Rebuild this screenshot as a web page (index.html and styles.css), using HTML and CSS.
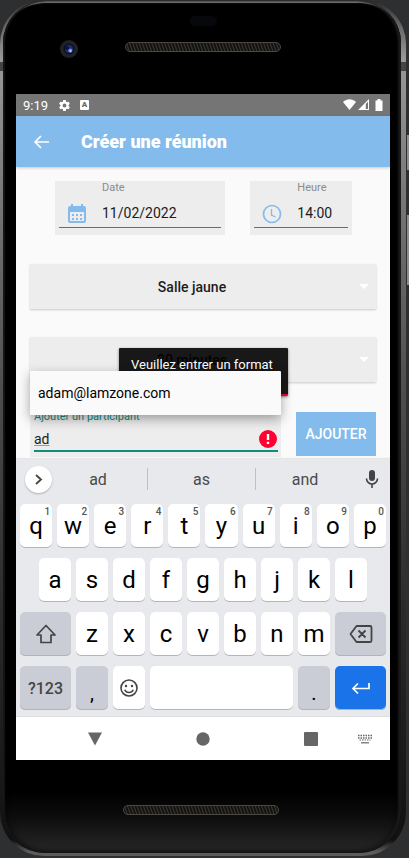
FILE: index.html
```html
<!DOCTYPE html>
<html lang="fr">
<head>
<meta charset="utf-8">
<meta name="viewport" content="width=device-width, initial-scale=1">
<title>Créer une réunion</title>
<link rel="stylesheet" href="styles.css">
</head>
<body>
<div class="phone">
<span class="side-button power"></span><span class="side-button volume"></span>
<div class="glass">
  <div class="bezel-top">
    <span class="sensor"></span>
    <svg class="camera" viewBox="0 0 18 18" aria-hidden="true"><circle cx="9" cy="9" r="9" fill="#212126"/><circle cx="9" cy="9" r="5.5" fill="#0b1026"/><circle cx="9" cy="9" r="4" fill="#1c2f6e"/><circle cx="7" cy="8" r="2" fill="#0c1434"/><circle cx="10.300" cy="10.500" r="2" fill="#5f86e8"/><circle cx="10.500" cy="11" r=".9" fill="#c5d8ff"/></svg>
    <span class="speaker"></span>
  </div>

  <div class="screen">
    <div class="status">
      <span>9:19</span>
      <svg class="gear" viewBox="0 0 24 24" aria-hidden="true"><path fill="#fff" d="M19.400 13c.1-.3.1-.6.1-1s0-.7-.1-1l2.100-1.600c.2-.2.2-.4.1-.7l-2-3.400c-.1-.2-.4-.3-.6-.2l-2.500 1a7 7 0 0 0-1.700-1l-.4-2.600c0-.3-.2-.5-.5-.5h-4c-.2 0-.5.200-.5.400L9 5.100a7 7 0 0 0-1.700 1l-2.400-1c-.3-.1-.5 0-.7.200l-2 3.400c-.1.200 0 .5.200.6L4.500 11v2l-2.100 1.600c-.2.200-.2.400-.1.700l2 3.400c.1.200.4.300.6.200l2.500-1c.5.400 1.100.7 1.700 1l.3 2.600c.1.300.3.500.6.500h4c.2 0 .5-.2.500-.4l.4-2.700a7 7 0 0 0 1.700-1l2.400 1c.3.100.5 0 .7-.2l2-3.400c.1-.2 0-.5-.2-.6zM12 15.500a3.500 3.500 0 1 1 0-7 3.500 3.500 0 0 1 0 7z"/></svg>
      <span class="badge-a">A</span>
      <svg class="signals" viewBox="0 0 42 14" aria-hidden="true"><path fill="#fff" d="M1 4C5 .400 10 .400 14 4L7.500 12z"/><path fill="#fff" fill-rule="evenodd" d="M16 12 27 1v11zM23.800 6v5H26V3.800z"/><path fill="#fff" d="M35.500 1h3v1.400H40.500V13h-7V2.400h2z"/></svg>
    </div>

    <header class="appbar">
      <button class="back" aria-label="Retour"><svg viewBox="0 0 16 14"><path d="M8 1 2 7l6 6M2 7h14" fill="none" stroke="#fff" stroke-width="1.700"/></svg></button>
      <h1>Créer une réunion</h1>
    </header>

    <main>
      <form class="form">
        <div class="when">
          <div class="field">
            <svg viewBox="0 0 20 20" aria-hidden="true"><path fill="#83bbec" fill-rule="evenodd" d="M3 2h1V0h2v2h8V0h2v2h1a2 2 0 0 1 2 2v13a2 2 0 0 1-2 2H3a2 2 0 0 1-2-2V4a2 2 0 0 1 2-2zm0 6v9h14V8z"/><path stroke="#83bbec" stroke-width="2" stroke-dasharray="2 2" d="M5 11h10M5 15h10" fill="none"/></svg>
            <label for="date">Date</label>
            <input id="date" type="text" value="11/02/2022">
          </div>
          <div class="field">
            <svg viewBox="0 0 20 20" aria-hidden="true"><circle cx="10" cy="10" r="8.500" fill="none" stroke="#83bbec" stroke-width="1.700"/><path d="M9.500 5v6l4 2" fill="none" stroke="#83bbec" stroke-width="1.300"/></svg>
            <label for="heure">Heure</label>
            <input id="heure" type="text" value="14:00">
          </div>
        </div>

        <div class="spinner"><select aria-label="Salle"><option>Salle jaune</option></select></div>
        <div class="spinner"><select aria-label="Durée"><option>30 minutes</option></select></div>

        <div class="invite">
          <div class="participant">
            <label for="participant">Ajouter un participant</label>
            <input id="participant" type="text" value="ad">
            <svg class="alert" viewBox="0 0 18 18" aria-hidden="true"><circle cx="9" cy="9" r="9" fill="#ff0030"/><path d="M9 4v6M9 11.700v2.300" stroke="#fff" stroke-width="2.400"/></svg>
            <div class="error">Veuillez entrer un format</div>
            <button type="button" class="suggestion">adam@lamzone.com</button>
          </div>
          <button type="button" class="add">AJOUTER</button>
        </div>
      </form>
    </main>

    <section class="keyboard" aria-label="Clavier">
      <div class="words">
        <button class="more" aria-label="Plus"><svg viewBox="0 0 27 27"><path d="m11 9 5 4.500-5 4.500" fill="none" stroke="#444" stroke-width="1.800"/></svg></button>
        <button>ad</button><button class="middle">as</button><button>and</button>
        <button aria-label="Micro"><svg class="mic" viewBox="0 0 14 20"><rect x="4" y="1" width="6" height="11" rx="3" fill="#444"/><path d="M1.500 9.500a5.500 5.500 0 0 0 11 0M7 15v4" fill="none" stroke="#444" stroke-width="1.600"/></svg></button>
      </div>
      <div class="row">
        <button>q<sup>1</sup></button><button>w<sup>2</sup></button><button>e<sup>3</sup></button><button>r<sup>4</sup></button><button>t<sup>5</sup></button><button>y<sup>6</sup></button><button>u<sup>7</sup></button><button>i<sup>8</sup></button><button>o<sup>9</sup></button><button>p<sup>0</sup></button>
      </div>
      <div class="row home">
        <button>a</button><button>s</button><button>d</button><button>f</button><button>g</button><button>h</button><button>j</button><button>k</button><button>l</button>
      </div>
      <div class="row">
        <button class="wide grey" aria-label="Majuscule"><svg viewBox="0 0 22 20"><path d="M11 1.500 2 11h4v7.500h10V11h4z" fill="none" stroke="#444" stroke-width="1.700" stroke-linejoin="round"/></svg></button>
        <button>z</button><button>x</button><button>c</button><button>v</button><button>b</button><button>n</button><button>m</button>
        <button class="wide grey" aria-label="Effacer"><svg class="erase" viewBox="0 0 24 20"><path d="M7.500 2H21a1.500 1.500 0 0 1 1.500 1.500v13A1.500 1.500 0 0 1 21 18H7.500L1.500 10zM9.500 6.500l7 7M16.500 6.500l-7 7" fill="none" stroke="#444" stroke-width="1.800" stroke-linejoin="round"/></svg></button>
      </div>
      <div class="row">
        <button class="wide grey symbols">?123</button>
        <button class="letter grey low">,</button>
        <button class="letter" aria-label="Émoji"><svg viewBox="0 0 20 20"><circle cx="10" cy="10" r="8" fill="none" stroke="#444" stroke-width="1.600"/><circle cx="7" cy="8" r="1.200" fill="#444"/><circle cx="13" cy="8" r="1.200" fill="#444"/><path d="M5.700 11.700a4.700 4.700 0 0 0 8.600 0" fill="none" stroke="#444" stroke-width="1.500"/></svg></button>
        <button class="space" aria-label="Espace"></button>
        <button class="letter grey low">.</button>
        <button class="wide enter" aria-label="Entrée"><svg viewBox="0 0 20 14"><path d="M18 2v5.500H2M7 2.500 2 7.500l5 5" fill="none" stroke="#fff" stroke-width="1.700"/></svg></button>
      </div>
    </section>

    <nav class="navbar">
      <button class="nav-back" aria-label="Retour"><svg viewBox="0 0 16 16"><path d="M1 1.500h14L8 14.500z" fill="#666"/></svg></button>
      <button class="nav-home" aria-label="Accueil"><svg viewBox="0 0 16 16"><circle cx="8" cy="8" r="6.700" fill="#666"/></svg></button>
      <button class="nav-recent" aria-label="Récents"><svg viewBox="0 0 16 16"><rect x="1" y="1" width="14" height="14" rx="1" fill="#666"/></svg></button>
      <button class="nav-keys" aria-label="Clavier"><svg viewBox="0 0 16 10"><path d="M1 1.500h14M1 4h14" stroke="#666" stroke-width="1.300" stroke-dasharray="1.500 1"/><path d="M2.500 6h11" stroke="#666" stroke-dasharray="1.500 1"/><path d="M4 8.800h8" stroke="#666" stroke-width="1.200"/></svg></button>
    </nav>
  </div>

  <div class="bezel-bottom"><span class="speaker"></span></div>
</div>
</div>
</body>
</html>
```
FILE: styles.css
```css
* { box-sizing: border-box; }

body {
  margin: 0;
  background: #2d2f31;
  font-family: Roboto, "Liberation Sans", sans-serif;
  color: #1c1c1c;
}

button, input, select {
  margin: 0;
  padding: 0;
  border: 0;
  border-radius: 0;
  background: none;
  font: inherit;
  color: inherit;
}

svg { display: block; }

/* Phone body */
.phone {
  position: relative;
  margin: 0 3px 2px 0;
  padding: 1px 5px 3px 3px;
  border-radius: 44px;
  background:
    linear-gradient(#444, #444) 0 62px / 100% 9px no-repeat,
    linear-gradient(#2a2a2a 0, #666 25px, #999 60px, #888 130px, #6c6c6c 240px, #4c4c4c 400px, #2c2c2c 600px, #181818 780px, #111 840px, #5c5c5c 852px);
}

.glass {
  border-radius: 42px;
  padding: 0 11px 0 13px;
  background: linear-gradient(#000 0, #000 790px, #0c0c0c 815px, #262626 848px);
  box-shadow: inset 2px 0 1px #161616, inset -3px 0 2px #1a1a1a, inset 0 6px 1px -4px #777, inset 0 0 8px #000;
}

.side-button {
  position: absolute;
  right: -3px;
  width: 2px;
  background: #8d8d8d;
}
.power { top: 135px; height: 35px; }
.volume { top: 215px; height: 70px; }

.bezel-top {
  display: grid;
  grid-template-columns: 1fr 156px 1fr;
  grid-template-rows: 10px 26px;
  row-gap: 4px;
  align-items: center;
  justify-items: center;
  height: 93px;
  padding-top: 15px;
}
.sensor {
  grid-column: 2;
  width: 27px;
  height: 10px;
  border-radius: 5px;
  background: #07080c;
}
.camera { grid-column: 1; width: 18px; height: 18px; margin: 12px 3px 0 0; }
.speaker {
  width: 156px;
  height: 10px;
  border: 1px solid #4a4845;
  border-radius: 5px;
  background: repeating-linear-gradient(70deg, #3c3935 0, #14120f 1px, #14120f 2px, #3c3935 3px);
}
.bezel-top .speaker { grid-column: 2; margin-top: 8px; }
.bezel-bottom { display: flex; justify-content: center; height: 93px; padding: 45px 4px 0 0; }

.screen { background: #fafafa; }

/* Status and app bar */
.status {
  display: flex;
  align-items: center;
  height: 22px;
  padding: 0 6px 0 7px;
  background: #757575;
  color: #fff;
  font-size: 13px;
}
.gear { width: 13px; height: 13px; margin-left: 10px; }
.badge-a {
  width: 9px;
  height: 10px;
  margin-left: 9px;
  border-radius: 1px;
  background: #fff;
  color: #666;
  font-size: 8px;
  font-weight: 900;
  line-height: 10px;
  text-align: center;
}
.signals { width: 42px; height: 14px; margin-left: auto; }

.appbar {
  display: flex;
  align-items: center;
  gap: 32px;
  height: 51px;
  padding-left: 17px;
  background: #83bbec;
  color: #fff;
  box-shadow: 0 1px 3px rgba(0, 0, 0, .2);
}
.back svg { width: 16px; height: 14px; }
.appbar h1 { margin: 0; font-size: 18px; font-weight: 900; }

/* Form */
.form {
  display: flex;
  flex-direction: column;
  padding: 14px 14px 2px;
}
.when {
  display: grid;
  grid-template-columns: 171fr 102fr;
  gap: 25px;
  padding: 0 24px 0 25px;
}
.field {
  display: grid;
  grid-template-columns: 43px 1fr;
  grid-template-rows: 14px 33px;
  height: 54px;
  padding: 0 4px;
  background: #ededed;
}
.field label { grid-column: 2; color: #8c8c8c; font-size: 11px; line-height: 14px; }
.field svg { grid-area: 2 / 1; width: 20px; height: 20px; margin: 9px 0 0 8px; }
.field input {
  grid-area: 2 / 1 / 3 / 3;
  width: 100%;
  min-width: 0;
  padding: 4px 0 0 43px;
  border-bottom: 1px solid #6c6c6c;
  font-size: 14px;
}

.spinner {
  position: relative;
  height: 45px;
  margin-top: 28px;
  background: #ededed;
  box-shadow: 0 1px 2px rgba(0, 0, 0, .2);
}
.when + .spinner { margin-top: 29px; }
.spinner::after {
  content: "";
  position: absolute;
  top: 20px;
  right: 7px;
  border: 5px solid transparent;
  border-top-color: #fff;
  border-bottom: 0;
}
.spinner select {
  appearance: none;
  width: 100%;
  height: 100%;
  padding-right: 22px;
  font-size: 14px;
  font-weight: 500;
  text-align-last: center;
}

.invite { display: flex; gap: 15px; margin-top: 26px; }
.participant {
  position: relative;
  display: flex;
  flex: 1;
  flex-direction: column;
  height: 49px;
  padding: 1px 3px 0 4px;
  background: #ededed;
}
.participant label { color: #128c7e; font-size: 11px; line-height: 16px; }
.participant input {
  width: 100%;
  height: 27px;
  padding-top: 2px;
  border-bottom: 2px solid #128c7e;
  font-size: 14px;
  text-decoration: underline #999;
}
.alert { position: absolute; right: 4px; top: 22px; width: 18px; height: 18px; }
.error {
  position: absolute;
  right: -7px;
  bottom: 61px;
  width: 169px;
  height: 48px;
  padding: 9px 12px;
  border-bottom: 2px solid #f3003a;
  border-radius: 1px;
  background: rgba(0, 0, 0, .9);
  box-shadow: 0 1px 3px rgba(0, 0, 0, .5);
  color: #fff;
  font-size: 13px;
  line-height: 16px;
  white-space: nowrap;
}
.suggestion {
  position: absolute;
  right: 0;
  bottom: 42px;
  left: 0;
  height: 44px;
  padding-left: 8px;
  border-radius: 1px;
  background: #fafafa;
  box-shadow: 0 4px 12px rgba(0, 0, 0, .35);
  color: #000;
  font-size: 14px;
  text-align: left;
}
.add {
  width: 80px;
  height: 44px;
  margin-top: 4px;
  background: #83bbec;
  color: #fff;
  font-size: 14px;
  font-weight: 500;
}

/* Keyboard */
.keyboard {
  position: relative;
  display: flex;
  flex-direction: column;
  gap: 10px;
  padding: 0 4px 6px;
  background: #e8e9ed;
  box-shadow: 0 -1px 1px rgba(0, 0, 0, .08);
}
.words {
  display: grid;
  grid-template-columns: 29px 98fr 109fr 98fr 32px;
  align-items: center;
  height: 35px;
  padding-top: 5px;
  color: #4a4a4a;
  font-size: 16px;
}
.words .middle { height: 22px; border: solid #bfc0c4; border-width: 0 1px; }
.more {
  width: 27px;
  height: 27px;
  margin-left: 5px;
  border-radius: 50%;
  background: #fff;
  box-shadow: 0 1px 2px rgba(0, 0, 0, .25);
}
.more svg { width: 27px; height: 27px; }
.mic { width: 14px; height: 20px; margin: 0 7px 0 auto; }

.row { display: flex; gap: 5px; }
.home { padding: 0 19px; }
.row button {
  position: relative;
  display: flex;
  flex: 1;
  align-items: center;
  justify-content: center;
  min-width: 0;
  height: 44px;
  border-radius: 5px;
  background: #fff;
  box-shadow: inset 0 -1px 0 #b3b4b8;
  color: #000;
  font-size: 24px;
}
.row sup {
  position: absolute;
  top: 3px;
  right: 2px;
  color: #555;
  font-size: 10px;
  font-weight: 500;
  line-height: 10px;
}
.row .wide { flex: 0 0 51px; }
.row .letter { flex: 0 0 32px; }
.row .grey { background: #cbcdd6; }
.row .symbols { color: #444; font-size: 16px; font-weight: 500; }
.row .low { padding-top: 10px; font-size: 20px; }
.row .enter { background: #1a73e8; }
.row svg { width: 22px; height: 20px; }
.row .erase { width: 24px; }
.row .enter svg { width: 20px; height: 14px; }

/* Navigation bar */
.navbar {
  display: grid;
  grid-template-columns: 25px 108fr 108fr 108fr 25px;
  align-items: center;
  height: 44px;
  border-top: 1px solid #dcdde1;
  background: #fff;
}
.navbar button { grid-row: 1; justify-self: center; }
.navbar svg { width: 16px; height: 16px; }
.navbar .nav-back { grid-column: 2; }
.navbar .nav-home { grid-column: 3; }
.navbar .nav-recent { grid-column: 4; }
.navbar .nav-keys { grid-column: 4 / 6; justify-self: end; margin-right: 17px; }
.navbar .nav-keys svg { height: 10px; }
```
